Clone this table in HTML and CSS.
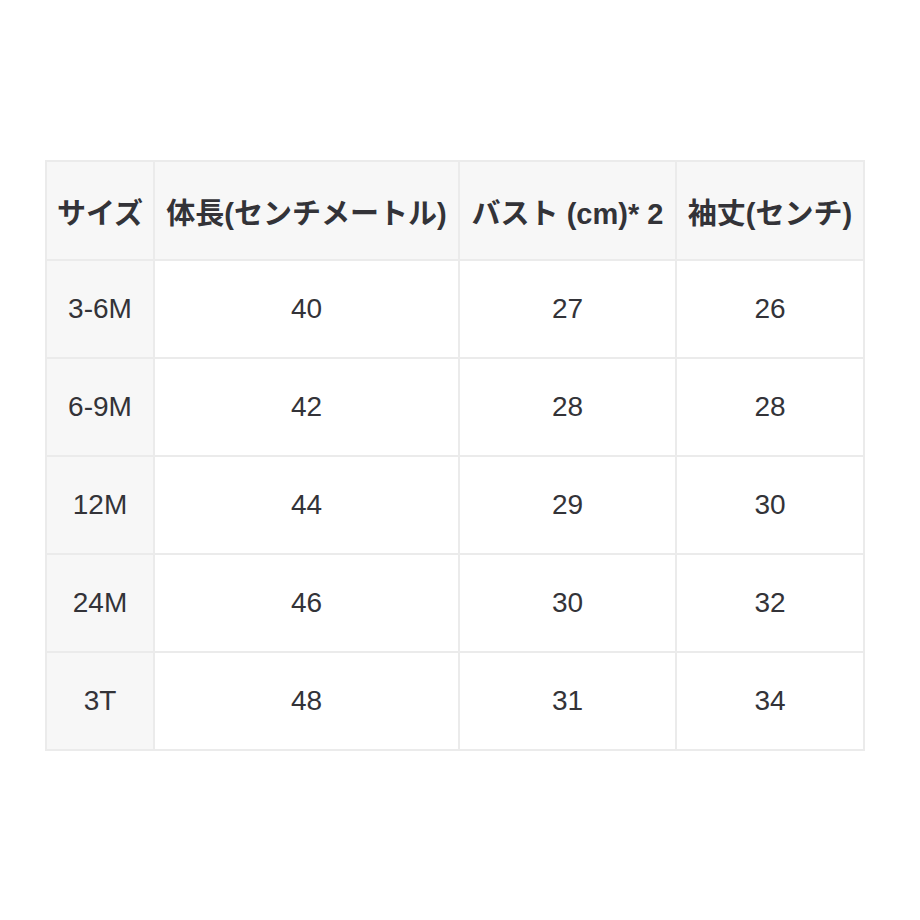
FILE: index.html
```html
<!DOCTYPE html>
<html lang="ja">
<head>
<meta charset="utf-8">
<link rel="stylesheet" href="styles.css">
</head>
<body>
<div class="wrap">
<table class="size-table">
<colgroup>
<col class="c1"><col class="c2"><col class="c3"><col class="c4">
</colgroup>
<thead>
<tr><th>サイズ</th><th>体長(センチメートル)</th><th>バスト (cm)* 2</th><th>袖丈(センチ)</th></tr>
</thead>
<tbody>
<tr><th>3-6M</th><td>40</td><td>27</td><td>26</td></tr>
<tr><th>6-9M</th><td>42</td><td>28</td><td>28</td></tr>
<tr><th>12M</th><td>44</td><td>29</td><td>30</td></tr>
<tr><th>24M</th><td>46</td><td>30</td><td>32</td></tr>
<tr><th>3T</th><td>48</td><td>31</td><td>34</td></tr>
</tbody>
</table>
</div>
</body>
</html>
```
FILE: styles.css
```css
html, body {
  margin: 0;
  padding: 0;
  background: #fff;
}
.wrap {
  padding: 160px 0 0 45px;
}
.size-table {
  width: 820px;
  table-layout: fixed;
  border-collapse: separate;
  border-spacing: 0;
  border-top: 2px solid #ebebeb;
  border-left: 2px solid #ebebeb;
  font-family: "Liberation Sans", Arial, "Noto Sans CJK JP", sans-serif;
  font-size: 28px;
  color: #333338;
}
.c1 { width: 108px; }
.c2 { width: 305px; }
.c3 { width: 217px; }
.c4 { width: 188px; }
.size-table th,
.size-table td {
  border-right: 2px solid #ebebeb;
  border-bottom: 2px solid #ebebeb;
  text-align: center;
  vertical-align: middle;
  padding: 0;
  white-space: nowrap;
}
.size-table thead th {
  height: 97px;
  background: #f7f7f7;
  font-weight: bold;
  font-size: 29px;
}
.size-table tbody th {
  background: #f7f7f7;
  font-weight: normal;
}
.size-table tbody td,
.size-table tbody th {
  height: 96px;
}
.size-table td {
  background: #fff;
}
```
